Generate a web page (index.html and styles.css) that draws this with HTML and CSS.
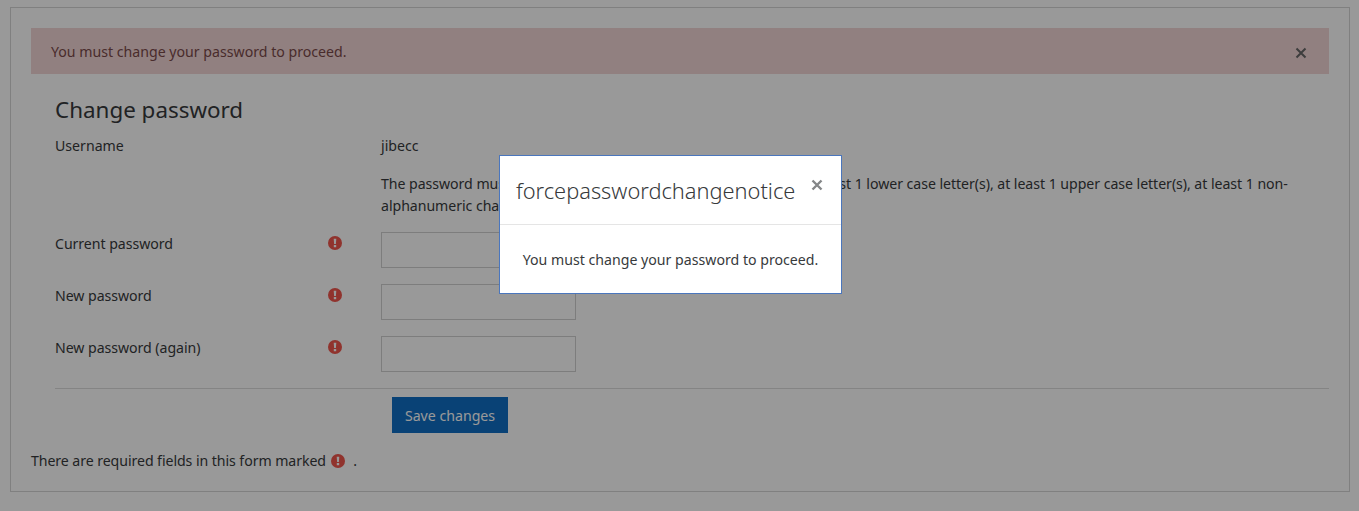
FILE: index.html
```html
<!DOCTYPE html>
<html lang="en">
<head>
<meta charset="utf-8">
<title>Change password</title>
<link rel="stylesheet" href="styles.css">
</head>
<body>
<main class="page">
  <div class="alert">
    <span class="alert-text">You must change your password to proceed.</span>
    <svg class="alert-close" viewBox="0 0 12 12" width="12" height="12"><path d="M1.5 1.5l9 9M10.5 1.5l-9 9"/></svg>
  </div>
  <form class="form">
    <h2 class="title">Change password</h2>
    <div class="row row-user"><div class="label">Username</div><div class="mark"></div><div class="value">jibecc</div></div>
    <div class="row row-policy"><div class="label"></div><div class="mark"></div><div class="value">The password must have at least 8 characters, at least 1 digit(s), at least 1 lower case letter(s), at least 1 upper case letter(s), at least 1 non-alphanumeric character(s) such as as *, -, or #</div></div>
    <div class="row row-field"><div class="label">Current password</div><div class="mark"><svg class="req" viewBox="0 0 14 14" width="14" height="14"><circle cx="7" cy="7" r="7"/><path class="bang" d="M5.7 2.8h2.6l-.4 5.2H6.1zM5.8 9.1h2.4v2.2H5.8z"/></svg></div><div class="value"><span class="input"></span></div></div>
    <div class="row row-field"><div class="label">New password</div><div class="mark"><svg class="req" viewBox="0 0 14 14" width="14" height="14"><circle cx="7" cy="7" r="7"/><path class="bang" d="M5.7 2.8h2.6l-.4 5.2H6.1zM5.8 9.1h2.4v2.2H5.8z"/></svg></div><div class="value"><span class="input"></span></div></div>
    <div class="row row-field"><div class="label">New password (again)</div><div class="mark"><svg class="req" viewBox="0 0 14 14" width="14" height="14"><circle cx="7" cy="7" r="7"/><path class="bang" d="M5.7 2.8h2.6l-.4 5.2H6.1zM5.8 9.1h2.4v2.2H5.8z"/></svg></div><div class="value"><span class="input"></span></div></div>
    <hr class="rule">
    <div class="actions"><span class="button">Save changes</span></div>
  </form>
  <p class="note">There are required fields in this form marked <svg class="req" viewBox="0 0 14 14" width="14" height="14"><circle cx="7" cy="7" r="7"/><path class="bang" d="M5.7 2.8h2.6l-.4 5.2H6.1zM5.8 9.1h2.4v2.2H5.8z"/></svg> <span class="dot">.</span></p>
</main>
<div class="backdrop"></div>
<div class="modal">
  <div class="modal-head">
    <h3 class="modal-title">forcepasswordchangenotice</h3>
    <svg class="modal-close" viewBox="0 0 12 12" width="12" height="12"><path d="M1.5 1.5l9 9M10.5 1.5l-9 9"/></svg>
  </div>
  <div class="modal-body">You must change your password to proceed.</div>
</div>
</body>
</html>
```
FILE: styles.css
```css
* { box-sizing: border-box; }
html, body { height: 100%; }
body {
  margin: 0;
  padding: 7px 9px 0 10px;
  background: #fff;
  color: #373a3c;
  font: 14.15px/22px "Noto Sans", "Open Sans", sans-serif;
  overflow: hidden;
}
.page {
  height: 485px;
  border: 1px solid #d6d6d6;
  padding: 20px 20px 0;
}
.alert {
  height: 46px;
  padding: 2px 22px 0 20px;
  background: #f2d5d5;
  color: #7a4a4a;
  display: flex;
  align-items: center;
  justify-content: space-between;
}
.alert-close { fill: none; stroke: #666; stroke-width: 2; margin-top: 1px; }
.form { margin: 0 0 0 24px; }
.title {
  margin: 21px 0 0;
  font-size: 22.4px;
  line-height: 30px;
  font-weight: 400;
}
.row { display: grid; grid-template-columns: 270px 56px 1fr; }
.row-user { margin-top: 10px; height: 38px; }
.row-policy { height: 59px; }
.row-field { height: 36px; margin-bottom: 16px; letter-spacing: -.05px; }
.row-field .label { padding-top: 1px; }
.row-policy .value { margin-right: 30px; letter-spacing: -.05px; }
.mark .req { margin-left: 3px; }
.req { vertical-align: -2px; }
.req circle { fill: #f0554c; }
.req .bang { fill: #fff; }
.input {
  display: block;
  width: 195px;
  height: 36px;
  border: 1px solid #d0d0d0;
  background: #fff;
}
.rule { margin: 0; border: 0; border-top: 1px solid #ddd; }
.actions { padding: 8px 0 0 337px; }
.button {
  display: inline-block;
  width: 116px;
  height: 36px;
  background: #0f6fc5;
  color: #fff;
  text-align: center;
  line-height: 38px;
}
.note { margin: 17px 0 0; letter-spacing: -.07px; }
.note .req { margin-left: 1px; }
.dot { margin-left: 5px; }
.backdrop {
  position: fixed;
  inset: 0;
  background: rgba(0, 0, 0, .4);
}
.modal {
  position: fixed;
  left: 499px;
  top: 155px;
  width: 343px;
  height: 139px;
  background: #fff;
  border: 1px solid #4a76bd;
}
.modal-head {
  height: 69px;
  border-bottom: 1px solid #e5e5e5;
  padding: 20px 0 0 16px;
  display: flex;
  justify-content: space-between;
}
.modal-title {
  margin: 0;
  font-size: 21.8px;
  line-height: 30px;
  font-weight: 300;
}
.modal-close {
  flex: none;
  fill: none;
  stroke: #848688;
  stroke-width: 2.4;
  margin: 3px 18px 0 0;
}
.modal-body { text-align: center; padding-top: 24px; }
```
